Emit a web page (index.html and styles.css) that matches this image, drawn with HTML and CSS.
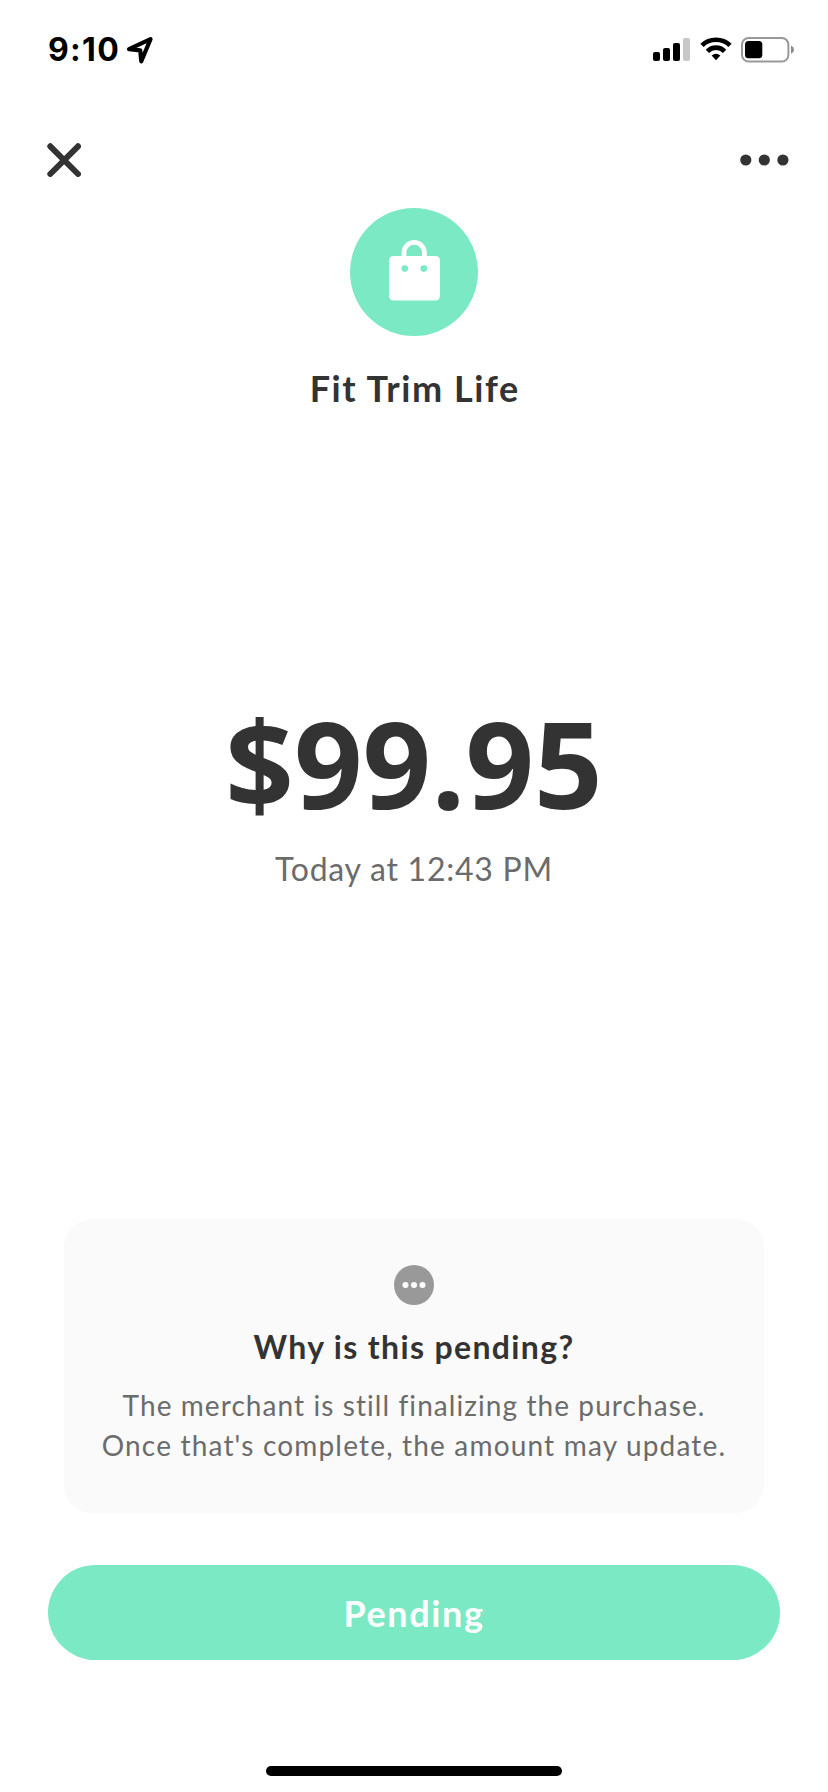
FILE: index.html
```html
<!DOCTYPE html>
<html lang="en">
<head>
<meta charset="utf-8">
<title>Payment details</title>
<link rel="stylesheet" href="styles.css">
</head>
<body>
<main class="screen">
  <header class="status">
    <div class="status-left">
      <span class="time">9:10</span>
      <svg class="locate" width="28" height="28" viewBox="0 0 28 28"><path d="M3 13.2 24.5 3.2 15.3 25.3 14.2 14.3Z" fill="none" stroke="#000" stroke-width="4.2" stroke-linejoin="round"/></svg>
    </div>
    <div class="status-right">
      <svg width="38" height="24" viewBox="0 0 38 24"><rect x="0" y="14" width="7" height="9" rx="2"/><rect x="10" y="10" width="7" height="13" rx="2"/><rect x="20" y="5" width="7" height="18" rx="2"/><rect x="30" y="0" width="7" height="23" rx="2" fill="#c8c8c8"/></svg>
      <svg class="wifi" width="32" height="24" viewBox="0 0 32 24"><g fill="none" stroke="#000" stroke-width="4.6"><path d="M2 8.4C9.6.8 22.4.8 30 8.4"/><path d="M7.4 14.3C12.2 9.4 19.8 9.4 24.6 14.3"/></g><path d="M11.6 18.6Q16 15 20.4 18.6L16 23.3Z"/></svg>
      <svg class="battery" width="54" height="26" viewBox="0 0 54 26"><rect x="1" y="1.1" width="46.4" height="23.4" rx="6.5" fill="none" stroke="#999" stroke-width="2"/><rect x="4" y="4" width="17.3" height="17.3" rx="3.5"/><path d="M50 8.6Q53 10 53 12.7T50 16.8Z" fill="#888"/></svg>
    </div>
  </header>
  <nav class="nav">
    <svg width="34" height="34" viewBox="0 0 34 34"><path d="M3.3 3.3 31 31M31 3.3 3.3 31" stroke="#333" stroke-width="6" stroke-linecap="round"/></svg>
    <svg width="50" height="12" viewBox="0 0 50 12" fill="#333"><circle cx="5.8" cy="6" r="5.6"/><circle cx="24.3" cy="6" r="5.6"/><circle cx="42.9" cy="6" r="5.6"/></svg>
  </nav>
  <section class="merchant">
    <svg width="128" height="128" viewBox="0 0 128 128"><circle cx="64" cy="64" r="64" fill="#7be9c3"/><path d="M54 50V44.6a10.2 10.2 0 0 1 20.4 0V50" fill="none" stroke="#fff" stroke-width="4.8"/><rect x="39" y="48" width="51" height="44.5" rx="4.5" fill="#fff"/><circle cx="54.8" cy="60.6" r="3.3" fill="#7be9c3"/><circle cx="73.8" cy="60.6" r="3.3" fill="#7be9c3"/></svg>
    <h1 class="name">Fit Trim Life</h1>
  </section>
  <section class="payment">
    <div class="amount">$99.95</div>
    <div class="date">Today at 12:43 PM</div>
  </section>
  <section class="card">
    <svg width="40" height="40" viewBox="0 0 40 40"><circle cx="20" cy="20" r="20" fill="#999"/><g fill="#fff"><circle cx="11.5" cy="20" r="3"/><circle cx="20" cy="20" r="3"/><circle cx="28.5" cy="20" r="3"/></g></svg>
    <h2 class="question">Why is this pending?</h2>
    <p class="reason"><span class="line first">The merchant is still finalizing the purchase.</span><span class="line second">Once that's complete, the amount may update.</span></p>
  </section>
  <button class="pending">Pending</button>
  <div class="home"></div>
</main>
</body>
</html>
```
FILE: styles.css
```css
* { box-sizing: border-box; }
body { margin: 0; background: #fff; font-family: Lato, "Open Sans", sans-serif; color: #333; }
svg { display: block; flex: none; }
.screen { width: 828px; height: 1792px; display: flex; flex-direction: column; overflow: hidden; background: #fff; }
.status { height: 100px; flex: none; padding: 36px 33px 0 48px; display: flex; justify-content: space-between; align-items: flex-start; }
.status-left, .status-right { display: flex; align-items: flex-start; }
.time { font: 700 32px/28px Inter, sans-serif; color: #000; letter-spacing: 1.3px; }
.locate { margin-left: 6px; }
.status-right { padding-top: 2px; }
.wifi { margin-left: 9px; margin-top: -1px; }
.battery { margin-left: 9px; margin-top: -1px; }
.nav { height: 108px; flex: none; padding: 43px 38px 0 47px; display: flex; justify-content: space-between; align-items: flex-start; }
.nav svg:last-child { margin-top: 11px; }
.merchant { display: flex; flex-direction: column; align-items: center; }
.name { margin: 30px 0 0; font-size: 36px; line-height: 44px; font-weight: 700; letter-spacing: 1.6px; text-indent: 1.6px; white-space: nowrap; }
.payment { margin-top: 293px; text-align: center; }
.amount { font: 700 120px/120px "Open Sans", sans-serif; }
.date { margin-top: 26px; font-size: 32px; line-height: 40px; color: #6b6b6b; letter-spacing: 0.75px; }
.card { margin: 330px 64px 0; height: 294px; padding-top: 46px; border-radius: 28px; background: #fafafa; display: flex; flex-direction: column; align-items: center; }
.question { margin: 22px 0 0; font-size: 32px; line-height: 40px; font-weight: 700; letter-spacing: 1.35px; }
.reason { margin: 18px 0 0; font-size: 28px; line-height: 40px; color: #6b6b6b; text-align: center; letter-spacing: 1.08px; }
.line { display: block; white-space: nowrap; }
.second { letter-spacing: 1.18px; }
.pending { margin: 52px 48px 0; height: 95px; flex: none; padding: 0; border: 0; border-radius: 48px; background: #7be9c3; color: #fff; font: 700 36px/44px Lato, sans-serif; letter-spacing: 1.6px; }
.home { width: 296px; height: 10px; margin: 106px auto 0; border-radius: 5px; background: #000; flex: none; }
```
